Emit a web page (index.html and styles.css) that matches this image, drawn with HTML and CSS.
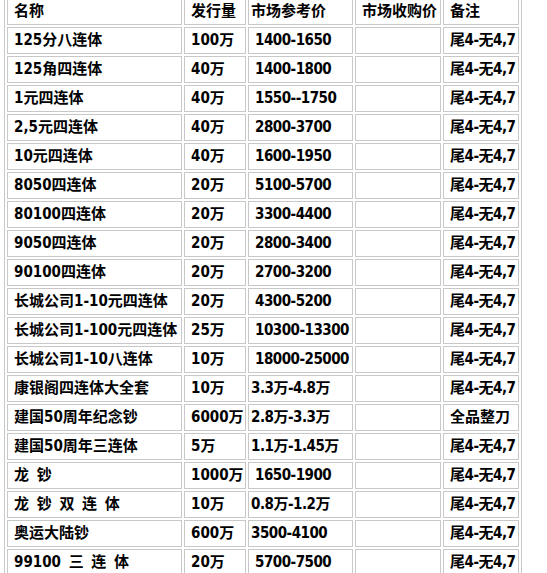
FILE: index.html
```html
<!DOCTYPE html>
<html>
<head>
<meta charset="utf-8">
<link rel="stylesheet" href="styles.css">
</head>
<body>
<table class="grid">
  <tr>
    <td class="c1">名称</td>
    <td class="c2">发行量</td>
    <td class="c3">市场参考价</td>
    <td class="c4">市场收购价</td>
    <td class="c5">备注</td>
  </tr>
  <tr><td>125分八连体</td><td>100万</td><td class="p ind">1400-1650</td><td></td><td class="n">尾4-无4,7</td></tr>
  <tr><td>125角四连体</td><td>40万</td><td class="p ind">1400-1800</td><td></td><td class="n">尾4-无4,7</td></tr>
  <tr><td>1元四连体</td><td>40万</td><td class="p ind">1550--1750</td><td></td><td class="n">尾4-无4,7</td></tr>
  <tr><td>2,5元四连体</td><td>40万</td><td class="p ind">2800-3700</td><td></td><td class="n">尾4-无4,7</td></tr>
  <tr><td>10元四连体</td><td>40万</td><td class="p ind">1600-1950</td><td></td><td class="n">尾4-无4,7</td></tr>
  <tr><td>8050四连体</td><td>20万</td><td class="p ind">5100-5700</td><td></td><td class="n">尾4-无4,7</td></tr>
  <tr><td>80100四连体</td><td>20万</td><td class="p ind">3300-4400</td><td></td><td class="n">尾4-无4,7</td></tr>
  <tr><td>9050四连体</td><td>20万</td><td class="p ind">2800-3400</td><td></td><td class="n">尾4-无4,7</td></tr>
  <tr><td>90100四连体</td><td>20万</td><td class="p ind">2700-3200</td><td></td><td class="n">尾4-无4,7</td></tr>
  <tr><td>长城公司1-10元四连体</td><td>20万</td><td class="p ind">4300-5200</td><td></td><td class="n">尾4-无4,7</td></tr>
  <tr><td>长城公司1-100元四连体</td><td>25万</td><td class="p ind">10300-13300</td><td></td><td class="n">尾4-无4,7</td></tr>
  <tr><td>长城公司1-10八连体</td><td>10万</td><td class="p ind">18000-25000</td><td></td><td class="n">尾4-无4,7</td></tr>
  <tr><td>康银阁四连体大全套</td><td>10万</td><td class="p">3.3万-4.8万</td><td></td><td class="n">尾4-无4,7</td></tr>
  <tr><td>建国50周年纪念钞</td><td>6000万</td><td class="p">2.8万-3.3万</td><td></td><td>全品整刀</td></tr>
  <tr><td>建国50周年三连体</td><td>5万</td><td class="p">1.1万-1.45万</td><td></td><td class="n">尾4-无4,7</td></tr>
  <tr><td class="sp">龙 钞</td><td>1000万</td><td class="p ind">1650-1900</td><td></td><td class="n">尾4-无4,7</td></tr>
  <tr><td class="sp">龙 钞 双 连 体</td><td>10万</td><td class="p">0.8万-1.2万</td><td></td><td class="n">尾4-无4,7</td></tr>
  <tr><td>奥运大陆钞</td><td>600万</td><td class="p">3500-4100</td><td></td><td class="n">尾4-无4,7</td></tr>
  <tr><td class="sp">99100 三 连 体</td><td>20万</td><td class="p ind">5700-7500</td><td></td><td class="n">尾4-无4,7</td></tr>
</table>
</body>
</html>
```

FILE: styles.css
```css
html, body {
  margin: 0;
  padding: 0;
  background: #ffffff;
}

.grid {
  margin: -5px 0 0 4px;
  width: 518px;
  table-layout: fixed;
  border-collapse: separate;
  border-spacing: 2px;
  border: 1px solid #c8c8c8;
  font-family: "DejaVu Sans Condensed", "DejaVu Sans", "Noto Sans CJK SC", sans-serif;
  font-size: 15px;
  font-weight: bold;
  color: #000000;
}

.grid td {
  box-sizing: border-box;
  height: 27px;
  border: 1px solid #c8c8c8;
  padding: 0 0 0 6px;
  vertical-align: middle;
  white-space: nowrap;
  overflow: hidden;
  line-height: 25px;
}

.grid td.c1 { width: 175px; }
.grid td.c2 { width: 62px; }
.grid td.c3 { width: 105px; }
.grid td.c4 { width: 86px; }
.grid td.c5 { width: 76px; }

.grid td.c3,
.grid td.p { padding-left: 2px; }
.grid td.p.ind { padding-left: 6px; }

.grid td.p,
.grid td.n { letter-spacing: -0.5px; }

.grid td.sp { word-spacing: 3px; }
```
